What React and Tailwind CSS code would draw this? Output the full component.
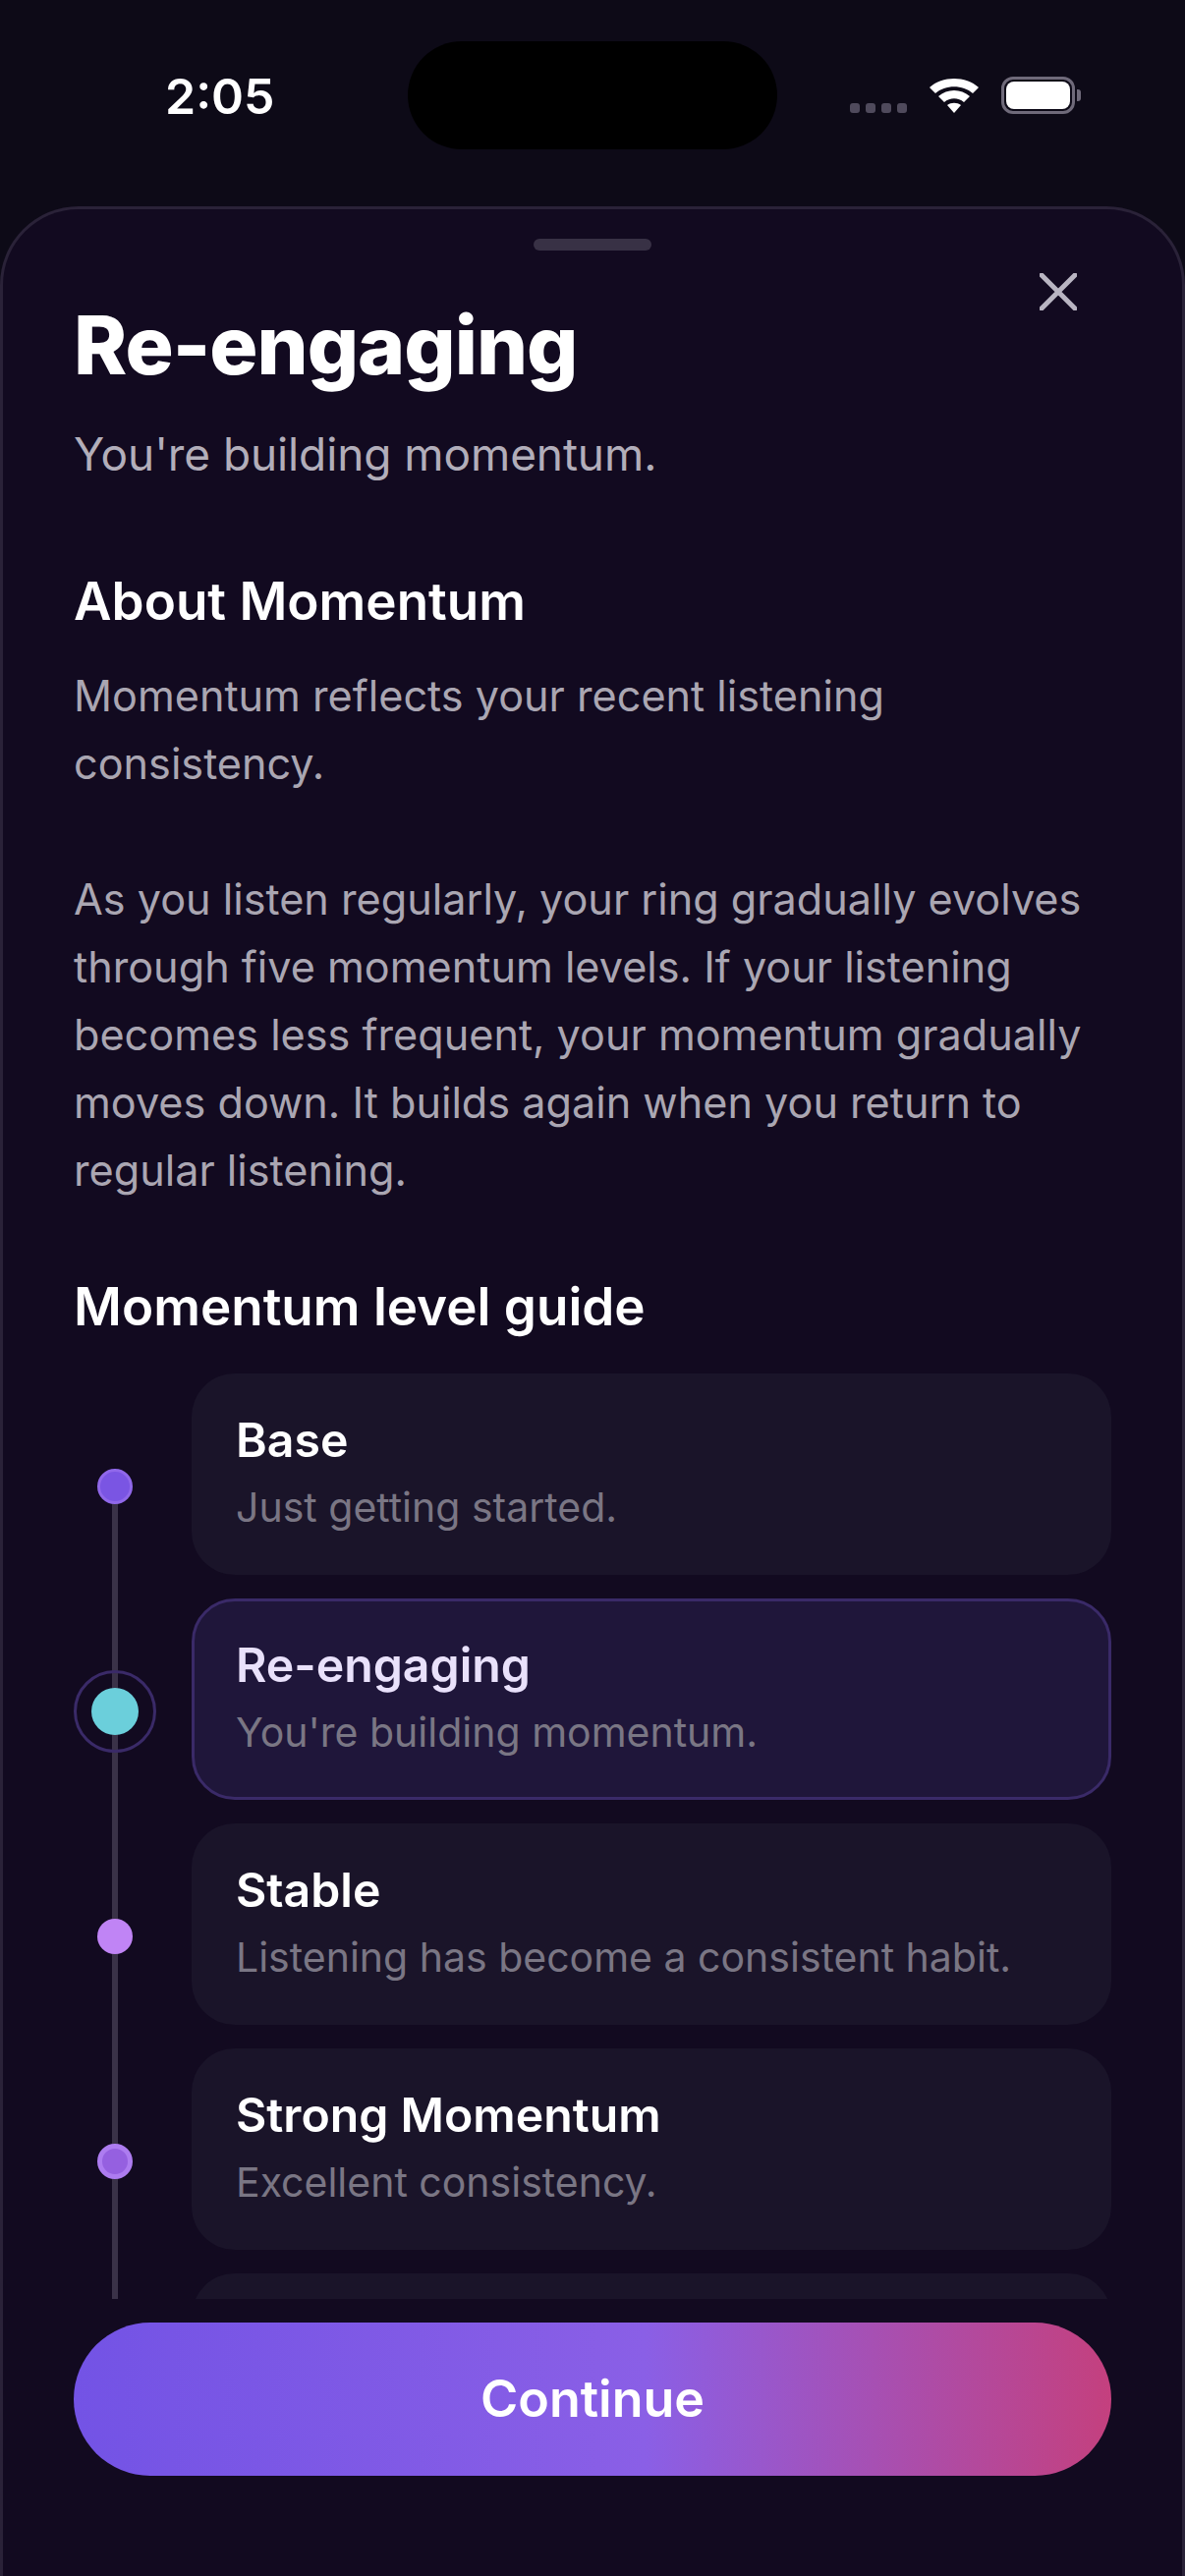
import React from "react";

const levels = [
  { name: "Base", text: "Just getting started.", dot: "w-9 h-9 bg-[#7a55e3] border-[3px] border-[#9068ea]" },
  { name: "Re-engaging", text: "You're building momentum.", current: true },
  { name: "Stable", text: "Listening has become a consistent habit.", dot: "w-9 h-9 bg-[#c084f5]" },
  { name: "Strong Momentum", text: "Excellent consistency.", dot: "w-9 h-9 bg-[#9560e0] border-[5px] border-[#ad7cf0]" },
  { name: "", text: "", dot: "w-9 h-9 bg-[#c4407e]" },
];

const StatusBar = () => (
  <div className="h-[210px] shrink-0 grid grid-cols-[1fr_376px_1fr] items-start">
    <div className="pl-[168px] pt-[77px] text-[50px] leading-[42px] font-semibold text-white">2:05</div>
    <div className="mt-[42px] h-[110px] rounded-[55px] bg-black"></div>
    <div className="flex items-end justify-end gap-[22px] pt-[78px] pr-[106px]">
      <div className="flex gap-[6px] mb-[1px]">
        <span className="w-[10px] h-[10px] rounded-[3px] bg-[#4f4a5c]"></span>
        <span className="w-[10px] h-[10px] rounded-[3px] bg-[#4f4a5c]"></span>
        <span className="w-[10px] h-[10px] rounded-[3px] bg-[#4f4a5c]"></span>
        <span className="w-[10px] h-[10px] rounded-[3px] bg-[#4f4a5c]"></span>
      </div>
      <svg width="52" height="38" viewBox="0 0 52 38">
        <path d="M1 11 C14 -1 38 -1 51 11 L45 17 C35 8 17 8 7 17 Z" fill="#fff" />
        <path d="M10 20 C19 12 33 12 42 20 L36 26 C30 21 22 21 16 26 Z" fill="#fff" />
        <path d="M19 29 C23 26 29 26 33 29 L26 37 Z" fill="#fff" />
      </svg>
      <div className="flex items-center">
        <div className="w-[75px] h-[38px] rounded-[12px] border-[3px] border-[#6f6a7a] p-[2px]">
          <div className="w-full h-full rounded-[8px] bg-white"></div>
        </div>
        <div className="w-[4px] h-[12px] ml-[2px] rounded-r-[3px] bg-[#6f6a7a]"></div>
      </div>
    </div>
  </div>
);

const LevelRow = ({ level }) => (
  <div className="flex items-center gap-[36px]">
    <div className="w-[84px] shrink-0 pt-[24px] flex justify-center relative">
      {level.current ? (
        <div className="w-[84px] h-[84px] rounded-full border-[3px] border-[#3a2a68] flex items-center justify-center">
          <div className="w-[48px] h-[48px] rounded-full bg-[#6bcfdb]"></div>
        </div>
      ) : (
        <div className={`rounded-full ${level.dot}`}></div>
      )}
    </div>
    <div
      className={
        level.current
          ? "flex-1 h-[205px] rounded-[44px] bg-[#1f163a] border-[3px] border-[#3a2a68] pl-[42px] pt-[34px]"
          : "flex-1 h-[205px] rounded-[44px] bg-[#1a1429] pl-[45px] pt-[37px]"
      }
    >
      <div className={`text-[48.2px] leading-[62px] font-semibold ${level.current ? "text-[#e9e1fb]" : "text-white"}`}>
        {level.name}
      </div>
      <div className="mt-[9px] text-[41px] leading-[56px] text-[#7a7684]">{level.text}</div>
    </div>
  </div>
);

export default function App() {
  return (
    <div
      className="w-[1206px] h-[2622px] flex flex-col bg-[#0d0a17] overflow-hidden"
      style={{ fontFamily: "Inter, sans-serif" }}
    >
      <StatusBar />

      <div className="relative flex-1 min-h-0 flex flex-col rounded-t-[80px] border-[3px] border-b-0 border-[#2a2238] bg-[#120a20]">
        <div className="w-[120px] h-[12px] mx-auto mt-[30px] shrink-0 rounded-full bg-[#383145]"></div>

        {/* close */}
        <svg width="38" height="38" viewBox="0 0 38 38" className="absolute right-[107px] top-[65px]">
          <path d="M2 2 L36 36 M36 2 L2 36" stroke="#b9b5c2" strokeWidth="5" strokeLinecap="round" />
        </svg>

        <div className="flex-1 min-h-0 overflow-hidden px-[72px]">
          <h1 className="mt-[49px] text-[82px] leading-[96px] font-extrabold tracking-[-1px] text-white">Re-engaging</h1>
          <p className="mt-[28px] text-[46px] leading-[69px] tracking-[-0.1px] text-[#b2aeba]">You're building momentum.</p>

          <h2 className="mt-[83px] text-[53px] leading-[64px] font-semibold text-white">About Momentum</h2>
          <p className="mt-[30px] text-[43.2px] leading-[69px] text-[#aaa6b2]">
            Momentum reflects your recent listening consistency.
            <br />
            <br />
            As you listen regularly, your ring gradually evolves through five momentum levels. If your listening
            becomes less frequent, your momentum gradually moves down. It builds again when you return to regular
            listening.
          </p>

          <h2 className="mt-[72px] text-[53px] leading-[64px] font-semibold text-white">Momentum level guide</h2>

          <div className="relative mt-[36px] flex flex-col gap-[24px]">
            <div className="absolute left-[39px] top-[115px] bottom-0 w-[6px] bg-[#3a3248]"></div>
            {levels.map((level, i) => (
              <div key={i} className="relative">
                <LevelRow level={level} />
              </div>
            ))}
          </div>
        </div>

        <div className="shrink-0 px-[72px] pt-[24px] pb-[102px]">
          <button className="w-full h-[156px] rounded-full bg-[linear-gradient(90deg,#7353e5_0%,#8a5fe6_55%,#c4407e_100%)] text-[52px] font-semibold text-white">
            Continue
          </button>
        </div>
      </div>
    </div>
  );
}
